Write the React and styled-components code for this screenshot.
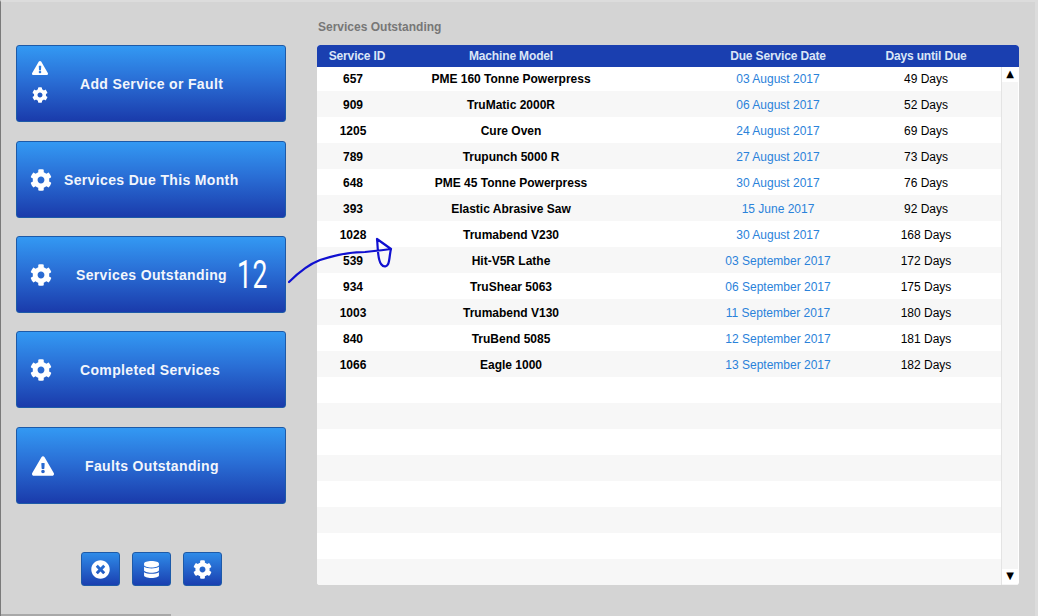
import styled, { createGlobalStyle } from 'styled-components'
import { FaCog, FaExclamationTriangle, FaTimesCircle, FaDatabase } from 'react-icons/fa'

const services = [
  ['657', 'PME 160 Tonne Powerpress', '03 August 2017', '49 Days'],
  ['909', 'TruMatic 2000R', '06 August 2017', '52 Days'],
  ['1205', 'Cure Oven', '24 August 2017', '69 Days'],
  ['789', 'Trupunch 5000 R', '27 August 2017', '73 Days'],
  ['648', 'PME 45 Tonne Powerpress', '30 August 2017', '76 Days'],
  ['393', 'Elastic Abrasive Saw', '15 June 2017', '92 Days'],
  ['1028', 'Trumabend V230', '30 August 2017', '168 Days'],
  ['539', 'Hit-V5R Lathe', '03 September 2017', '172 Days'],
  ['934', 'TruShear 5063', '06 September 2017', '175 Days'],
  ['1003', 'Trumabend V130', '11 September 2017', '180 Days'],
  ['840', 'TruBend 5085', '12 September 2017', '181 Days'],
  ['1066', 'Eagle 1000', '13 September 2017', '182 Days'],
]

const emptyRows = Array.from({ length: 8 }, () => ['', '', '', ''])

export default function App() {
  return (
    <Page>
      <GlobalStyle />
      <Sidebar>
        <MenuButton $pad={15} $gap={32}>
          <IconStack>
            <FaExclamationTriangle size={16} />
            <FaCog size={16} />
          </IconStack>
          Add Service or Fault
        </MenuButton>
        <MenuButton $pad={13} $gap={12} $nudge>
          <FaCog size={22} />
          Services Due This Month
        </MenuButton>
        <MenuButton $pad={13} $gap={24}>
          <FaCog size={22} />
          Services Outstanding
          <HandNumber>12</HandNumber>
        </MenuButton>
        <MenuButton $pad={13} $gap={28}>
          <FaCog size={22} />
          Completed Services
        </MenuButton>
        <MenuButton $pad={15} $gap={31} $nudge>
          <FaExclamationTriangle size={22} />
          Faults Outstanding
        </MenuButton>
        <SmallButtons>
          <SmallButton><FaTimesCircle size={19} /></SmallButton>
          <SmallButton><FaDatabase size={17} /></SmallButton>
          <SmallButton><FaCog size={19} /></SmallButton>
        </SmallButtons>
      </Sidebar>

      <Main>
        <Title>Services Outstanding</Title>
        <TableCard>
          <HeaderRow>
            <span>Service ID</span>
            <span>Machine Model</span>
            <span>Due Service Date</span>
            <span>Days until Due</span>
          </HeaderRow>
          <TableBody>
            <Rows>
              {[...services, ...emptyRows].map((row, i) => (
                <Row key={i} $odd={i % 2 === 1}>
                  <IdCell>{row[0]}</IdCell>
                  <ModelCell>{row[1]}</ModelCell>
                  <DateCell>{row[2]}</DateCell>
                  <DaysCell>{row[3]}</DaysCell>
                </Row>
              ))}
            </Rows>
            <Scrollbar>
              <ScrollArrow>▲</ScrollArrow>
              <ScrollArrow>▼</ScrollArrow>
            </Scrollbar>
          </TableBody>
        </TableCard>
      </Main>

      <InkArrow width="110" height="50" viewBox="0 0 110 50">
        <path
          d="M1 45 C9 37 19 28 32 23 C47 18 62 15 77 15 C87 14 97 13 103 12 L89 2 C90 8 89 21 93 27 C96 31 100 30 101 24 C102 19 102 15 103 12"
          fill="none"
          stroke="#1010d0"
          strokeWidth="2.2"
          strokeLinecap="round"
          strokeLinejoin="round"
        />
      </InkArrow>
      <BottomEdge />
    </Page>
  )
}

const GlobalStyle = createGlobalStyle`
  html, body {
    margin: 0;
    padding: 0;
    background: #d4d4d4;
  }
`

const Page = styled.div`
  position: relative;
  box-sizing: border-box;
  display: flex;
  width: 1038px;
  height: 616px;
  overflow: hidden;
  padding-left: 15px;
  background: #d4d4d4;
  border-left: 1px solid #7a7a7a;
  border-top: 2px solid #dcdcdc;
  border-right: 3px solid #dcdcdc;
  font-family: 'Liberation Sans', Arial, sans-serif;
`

const Sidebar = styled.nav`
  display: flex;
  flex-direction: column;
  gap: 18px;
  width: 270px;
  padding-top: 43px;
`

const MenuButton = styled.button`
  position: relative;
  display: flex;
  align-items: center;
  gap: ${p => p.$gap}px;
  flex: none;
  height: 77px;
  margin-top: ${p => (p.$nudge ? 1 : 0)}px;
  padding: 0 0 0 ${p => p.$pad}px;
  background: linear-gradient(#3399f3, #2a6fd6 45%, #1a3bab);
  border: 1px solid #1d5aa8;
  border-radius: 3px;
  color: #f2f6fc;
  font: bold 14px 'Liberation Sans', Arial, sans-serif;
  letter-spacing: 0.35px;
  white-space: nowrap;

  svg {
    flex: none;
    color: #fff;
  }
`

const IconStack = styled.span`
  display: flex;
  flex-direction: column;
  align-items: center;
  gap: 11px;
  padding-bottom: 5px;
`

const HandNumber = styled.span`
  position: absolute;
  left: 220px;
  top: 15px;
  color: #fff;
  font: 400 39px Roboto, sans-serif;
  letter-spacing: 1px;
  transform: scaleX(0.68);
  transform-origin: left center;
`

const SmallButtons = styled.div`
  display: flex;
  justify-content: center;
  gap: 12px;
  margin-top: 30px;
`

const SmallButton = styled.button`
  display: flex;
  align-items: center;
  justify-content: center;
  width: 39px;
  height: 34px;
  padding: 0;
  background: linear-gradient(#2f8be8, #1a3fb0);
  border: 1px solid #1d5aa8;
  border-radius: 3px;
  color: #fff;
`

const Main = styled.main`
  display: flex;
  flex-direction: column;
  width: 702px;
  margin-left: 31px;
  padding-top: 18px;
`

const Title = styled.h1`
  margin: 0 0 11px 1px;
  height: 14px;
  color: #777;
  font: bold 12px/14px 'Liberation Sans', Arial, sans-serif;
`

const columns = `
  display: grid;
  grid-template-columns: 80px 228px 251px 100px;
  text-align: center;
  white-space: nowrap;
`

const HeaderRow = styled.div`
  ${columns}
  position: relative;
  z-index: 1;
  height: 22px;
  align-items: center;
  background: #1a3fb0;
  border-radius: 3px 3px 0 0;
  color: #dbe6f7;
  font-size: 12px;
  font-weight: bold;
  letter-spacing: -0.15px;

  span:nth-child(3) {
    padding-left: 55px;
  }
`

const TableCard = styled.section`
  display: flex;
  flex-direction: column;
  height: 540px;
  background: #fff;
  border-radius: 3px;
  overflow: hidden;
`

const TableBody = styled.div`
  display: flex;
  flex: 1;
  min-height: 0;
`

const Rows = styled.div`
  width: 684px;
  margin-top: -2px;
`

const Row = styled.div`
  ${columns}
  height: 26px;
  padding-top: 1px;
  box-sizing: border-box;
  align-items: center;
  background: ${p => (p.$odd ? '#f7f7f7' : '#fff')};
  color: #000;
  font-size: 12px;
`

const IdCell = styled.div`
  padding-right: 8px;
  font-weight: bold;
`

const ModelCell = styled.div`
  font-weight: bold;
`

const DateCell = styled.div`
  padding-left: 55px;
  color: #2a82da;
`

const DaysCell = styled.div``

const Scrollbar = styled.div`
  display: flex;
  flex-direction: column;
  justify-content: space-between;
  width: 17px;
  padding-bottom: 1px;
  background: #f5f5f5;
  border-left: 1px solid #e4e4e4;
  box-sizing: border-box;
`

const ScrollArrow = styled.div`
  height: 15px;
  background: #fff;
  color: #000;
  font: 10px/13px 'DejaVu Sans', sans-serif;
  text-align: center;
`

const InkArrow = styled.svg`
  position: absolute;
  left: 287px;
  top: 235px;
  z-index: 2;
`

const BottomEdge = styled.div`
  position: absolute;
  left: 0;
  bottom: 0;
  width: 170px;
  height: 2px;
  background: #a8a8a8;
`
